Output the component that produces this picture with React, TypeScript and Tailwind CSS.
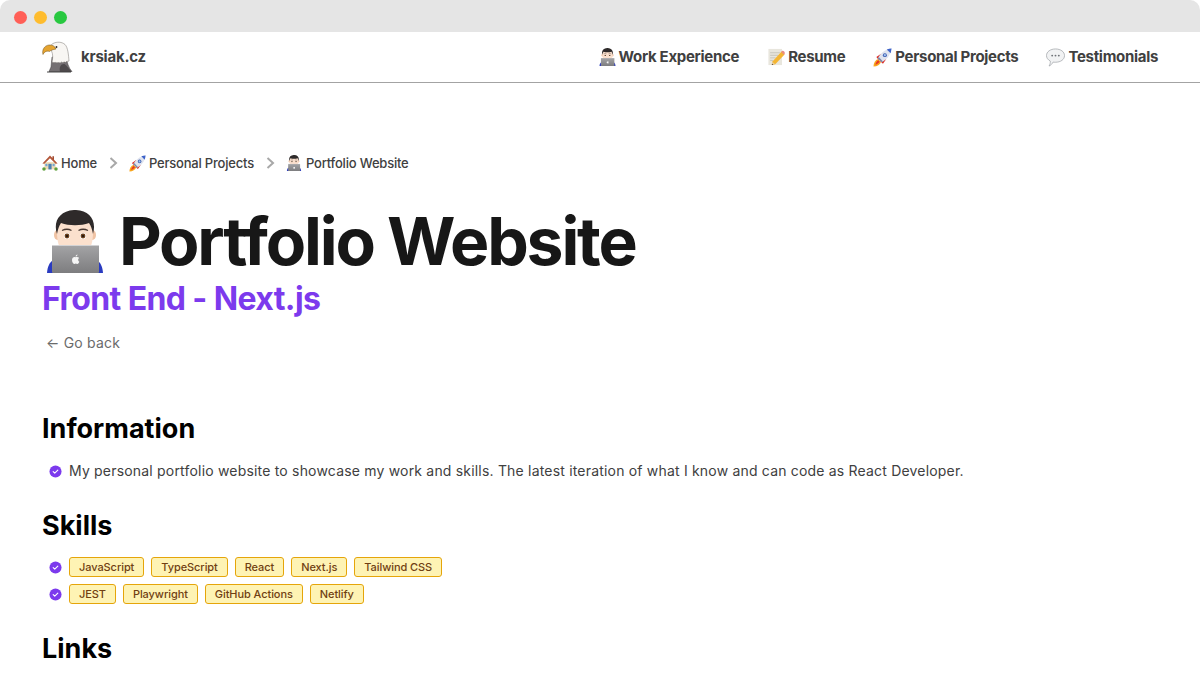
const font = { fontFamily: "Inter, 'Liberation Sans', sans-serif" };

function ManIcon({ className }: { className: string }) {
  return (
    <svg viewBox="0 0 56 63" className={className}>
      <defs>
        <linearGradient id="lap" x1="0" y1="0" x2="0" y2="1">
          <stop offset="0" stopColor="#a4a4a6" />
          <stop offset="1" stopColor="#7d7d7f" />
        </linearGradient>
      </defs>
      <path d="M0 63 C0.500 57 2 53 6 50 H50 C54 53 55.500 57 56 63 Z" fill="#2a3bc0" />
      <ellipse cx="10.500" cy="25" rx="3.500" ry="5" fill="#f0c3a4" />
      <ellipse cx="45.500" cy="25" rx="3.500" ry="5" fill="#f0c3a4" />
      <path d="M10 22 C10 12 18 6 28 6 C38 6 46 12 46 22 C46 32 44 38 40 42 H16 C12 38 10 32 10 22 Z" fill="#fbe0cd" />
      <path d="M10 24 C6 12 12 1 27 0 C42 -0.500 50 10 46 24 C45 19 44 16 42 13 C34 16 22 16 14 13 C12 16 11 19 10 24 Z" fill="#2e2a2a" />
      <circle cx="20" cy="26" r="3" fill="#fff" />
      <circle cx="36" cy="26" r="3" fill="#fff" />
      <circle cx="20" cy="26" r="2.400" fill="#6b3f1c" />
      <circle cx="36" cy="26" r="2.400" fill="#6b3f1c" />
      <circle cx="20" cy="26" r="1.100" fill="#1c1310" />
      <circle cx="36" cy="26" r="1.100" fill="#1c1310" />
      <path d="M15 20.500 Q20 18 24.500 20.500 M31.500 20.500 Q36 18 41 20.500" stroke="#4a3a33" strokeWidth="1.300" fill="none" />
      <rect x="5" y="35" width="47" height="28" rx="1" fill="url(#lap)" />
      <rect x="5" y="35" width="47" height="1" fill="#d2d2d4" />
      <path d="M28.500 47.300 C27.500 46.500 25 47 25 50 C25 52.500 26.500 54 27.500 54 C28 54 28.200 53.600 28.800 53.600 C29.400 53.600 29.600 54 30.200 54 C31.200 54 32 52.700 32.300 51.700 C30.800 51 30.700 48.700 32.200 48 C31.500 47 29.800 46.700 28.500 47.300 Z M28.600 46.600 C28.600 45.500 29.400 44.600 30.500 44.500 C30.600 45.600 29.700 46.600 28.600 46.600 Z" fill="#f6f6f6" />
    </svg>
  );
}

function RocketIcon({ className }: { className: string }) {
  return (
    <svg viewBox="0 0 20 20" className={className}>
      <path d="M0.500 19.500 C0.500 15.500 2.500 12.500 5.500 11.500 L8.500 14.500 C7.500 17.500 4.500 19.500 0.500 19.500 Z" fill="#f8a51c" />
      <path d="M2.500 17.500 C3 15.500 4 14 5.500 13 L7 14.500 C6 16 4.500 17 2.500 17.500 Z" fill="#e8352a" />
      <path d="M3.500 9.500 L8.500 6 L6 12.500 Z M10.500 16.500 L14 11.500 L7.500 14 Z" fill="#d9302b" />
      <path d="M5 11 C7.500 6 12 1.500 19.500 0.500 C18.500 8 14 12.500 9 15 Z" fill="#dfe3ee" />
      <path d="M5 11 L9 15 L10.500 14.200 L6 9.500 Z" fill="#7b88a8" />
      <path d="M14.500 1.500 C16 1 18 0.700 19.500 0.500 C19.300 2 19 3.800 18.500 5.500 Z" fill="#3e63c9" />
      <circle cx="12.500" cy="7.500" r="2.100" fill="#3a5bb0" />
      <circle cx="12.500" cy="7.500" r="1.200" fill="#9fc1ee" />
    </svg>
  );
}

function MemoIcon({ className }: { className: string }) {
  return (
    <svg viewBox="0 0 20 20" className={className}>
      <rect x="0.500" y="0.500" width="16" height="19" fill="#e8e6dd" />
      <path d="M2.500 5 H14 M2.500 8 H12 M2.500 11 H9 M2.500 14 H6" stroke="#b8b6ad" strokeWidth="0.800" />
      <path d="M5 15.500 L16 3.500 L19.500 7 L8.500 18.500 L4.500 19.500 Z" fill="#f4b532" />
      <path d="M15.500 4 L16.500 3 C17.300 2.500 18.200 2.700 19 3.500 C19.800 4.400 20 5.500 19.500 6.500 L18.800 7.300 Z" fill="#ea8b80" />
      <path d="M4.500 19.500 L5 15.500 L8.500 18.500 Z" fill="#e9cfa2" />
      <path d="M4.500 19.500 L4.800 17.800 L6.300 19 Z" fill="#3d332c" />
    </svg>
  );
}

function BubbleIcon({ className }: { className: string }) {
  return (
    <svg viewBox="0 0 20 20" className={className}>
      <path d="M10 1 C15.500 1 19.500 4 19.500 8 C19.500 12 15.500 15 10 15 C9 15 8.200 15 7.500 14.800 C6.500 16.700 5 18.300 3.200 19 C4.300 17.300 4.700 15.500 4.500 13.700 C2 12.400 0.500 10.400 0.500 8 C0.500 4 4.500 1 10 1 Z" fill="#f1f2f3" stroke="#a2a6ab" strokeWidth="0.800" />
      <circle cx="6.500" cy="8" r="1" fill="#6f7378" />
      <circle cx="10" cy="8" r="1" fill="#6f7378" />
      <circle cx="13.500" cy="8" r="1" fill="#6f7378" />
    </svg>
  );
}

function HouseIcon({ className }: { className: string }) {
  return (
    <svg viewBox="0 0 20 20" className={className}>
      <rect x="3" y="9" width="14" height="9" fill="#f0dcb4" />
      <path d="M10 2.500 L15 7.500 V1.500 H13 V4 Z" fill="#a04c33" />
      <path d="M0.500 10.500 L10 0.500 L19.500 10.500 L17 11 L10 4 L3 11 Z" fill="#b3573a" />
      <rect x="8" y="11" width="4" height="7" fill="#4d7fb0" />
      <rect x="4.200" y="11" width="2.600" height="3" fill="#6fa7d8" />
      <rect x="13.200" y="11" width="2.600" height="3" fill="#6fa7d8" />
      <circle cx="2.500" cy="17.500" r="2.200" fill="#5f9f3d" />
      <circle cx="17.500" cy="17.500" r="2.200" fill="#5f9f3d" />
    </svg>
  );
}

function EagleIcon() {
  return (
    <svg viewBox="0 0 32 32" className="w-8 h-8 shrink-0">
      <path d="M8 30.500 L10 26 L11 16 H25 C26 21 27.500 27 31 30.500 Z" fill="#746f72" stroke="#3c393a" strokeWidth="0.500" />
      <path d="M19 30.500 C18 26 20 22.500 23.500 23 C26 24.500 28 28 30.500 30.500 Z" fill="#4e4a4c" />
      <path d="M11 21 C12 17 12 13 10.500 10 C9 7 9 4 12 2.500 C16 0.500 21 0.800 24 3.500 C27 6.500 27.500 14 28 20 C26.500 21 25.500 19.500 24.500 21.500 C23 20 22 22.500 20.500 21 C19 23 17.500 20.500 16 22 C14.500 20.500 13 22.500 11 21 Z" fill="#f8f6f3" stroke="#77736f" strokeWidth="0.500" />
      <path d="M2 13.500 C0.800 9.500 3 4.500 8 4 C11 3.700 14 5 15 8 C12 8.500 9.500 9.500 8.500 10.500 C6 9.500 3.500 10.500 2 13.500 Z" fill="#e5a430" stroke="#6e5220" strokeWidth="0.500" />
      <circle cx="15.500" cy="6" r="0.900" fill="#2b2422" />
      <path d="M6 31 H30" stroke="#1a1a1a" strokeWidth="0.800" />
    </svg>
  );
}

function Check() {
  return (
    <svg viewBox="0 0 14 14" className="w-[13px] h-[13px] shrink-0">
      <circle cx="7" cy="7" r="6.500" fill="#7c3aed" />
      <path d="M4.500 7.200 L6.200 8.800 L9.500 5.500" stroke="#fff" strokeWidth="1.200" fill="none" strokeLinecap="round" strokeLinejoin="round" />
    </svg>
  );
}

function Chevron() {
  return (
    <svg viewBox="0 0 9 12" className="w-[9px] h-3 shrink-0">
      <path d="M1.500 1 L7 6 L1.500 11" stroke="#a8a8a8" strokeWidth="2" fill="none" />
    </svg>
  );
}

function Tag({ label }: { label: string }) {
  return (
    <span className="h-5 px-[9px] flex items-center rounded-[3px] border border-[#e5a50a] bg-[#fef3b4] text-[#713f12] text-[11px] font-medium tracking-[-0.08px]">
      {label}
    </span>
  );
}

const nav = [
  { label: "Work Experience", icon: <ManIcon className="w-[17px] h-[18px]" /> },
  { label: "Resume", icon: <MemoIcon className="w-[17px] h-[18px]" /> },
  { label: "Personal Projects", icon: <RocketIcon className="w-[19px] h-[19px]" /> },
  { label: "Testimonials", icon: <BubbleIcon className="w-[19px] h-[19px]" /> },
];

export default function App() {
  return (
    <div style={font} className="w-[1200px] h-[680px] overflow-hidden bg-white rounded-[10px] flex flex-col">
      <div className="h-8 shrink-0 bg-[#e5e5e5] flex items-center gap-[7px] pl-[14px] pt-[2px]">
        <span className="w-[13px] h-[13px] rounded-full bg-[#ff5f57]" />
        <span className="w-[13px] h-[13px] rounded-full bg-[#febc2e]" />
        <span className="w-[13px] h-[13px] rounded-full bg-[#28c840]" />
      </div>

      <header className="h-[51px] shrink-0 border-b border-[#a3a3a3] flex items-center justify-between pl-[41px] pr-[42px]">
        <div className="flex items-center gap-[8px]">
          <EagleIcon />
          <span className="text-[15px] font-bold tracking-[-0.2px] text-[#404040]">krsiak.cz</span>
        </div>
        <nav className="flex items-center gap-[28px]">
          {nav.map((item) => (
            <div key={item.label} className="flex items-center gap-[3px] first:mr-[1px] text-[15px] leading-5 font-[650] tracking-[-0.3px] text-[#404040]">
              {item.icon}
              <span>{item.label}</span>
            </div>
          ))}
        </nav>
      </header>

      <main className="px-[42px] pt-[70px]">
        <div className="flex items-center text-[13px] leading-5 font-medium tracking-[-0.2px] text-[#404040]">
          <HouseIcon className="w-4 h-4 mr-[3px]" />
          <span>Home</span>
          <span className="ml-3 mr-[11px]"><Chevron /></span>
          <RocketIcon className="w-[17px] h-[17px] mr-[3px]" />
          <span>Personal Projects</span>
          <span className="ml-3 mr-[11px]"><Chevron /></span>
          <ManIcon className="w-4 h-4 mr-1" />
          <span>Portfolio Website</span>
        </div>

        <h1 className="mt-[32px] flex items-center text-[66px] leading-[72px] font-bold tracking-[-2.200px] text-[#171717]">
          <ManIcon className="ml-[5px] mr-[16px] w-[56px] h-[63px] shrink-0" />
          <span>Portfolio Website</span>
        </h1>
        <p className="mt-1 text-[32px] leading-9 font-bold tracking-[-0.600px] text-[#7c3aed]">Front End - Next.js</p>
        <p className="mt-4 pl-[4px] text-[14px] leading-5 text-[#6b6b6b] tracking-[0.200px]">← Go back</p>

        <h2 className="mt-[58px] text-[27px] leading-9 font-bold text-black">Information</h2>
        <div className="mt-[12px] flex items-center gap-[7px] pl-[7px]">
          <Check />
          <p className="text-[14px] leading-6 text-[#404040] tracking-[0.190px]">
            My personal portfolio website to showcase my work and skills. The latest iteration of what I know and can code as React Developer.
          </p>
        </div>

        <h2 className="mt-[25px] text-[27px] leading-9 font-bold text-black">Skills</h2>
        <div className="mt-[13px] flex flex-col gap-[7px]">
          <div className="flex items-center gap-[7px] pl-[7px]">
            <Check />
            <div className="flex gap-[7px]">
              {["JavaScript", "TypeScript", "React", "Next.js", "Tailwind CSS"].map((t) => <Tag key={t} label={t} />)}
            </div>
          </div>
          <div className="flex items-center gap-[7px] pl-[7px]">
            <Check />
            <div className="flex gap-[7px]">
              {["JEST", "Playwright", "GitHub Actions", "Netlify"].map((t) => <Tag key={t} label={t} />)}
            </div>
          </div>
        </div>

        <h2 className="mt-[27px] text-[27px] leading-9 font-bold text-black">Links</h2>
      </main>
    </div>
  );
}
